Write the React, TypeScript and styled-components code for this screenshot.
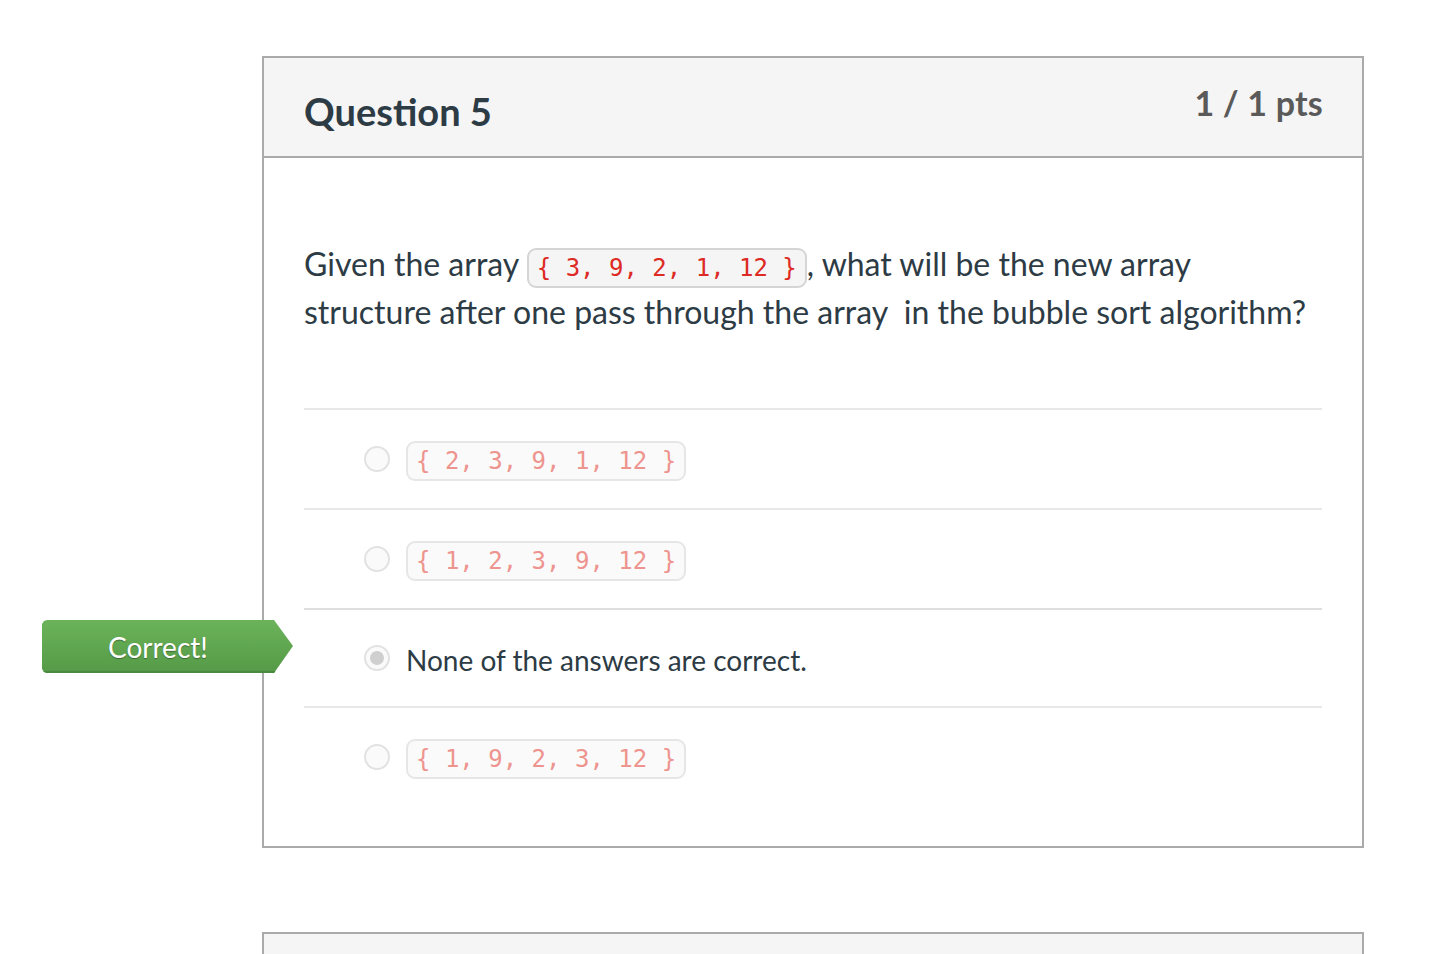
import React from "react";
import styled, { createGlobalStyle } from "styled-components";

const Global = createGlobalStyle`
  html, body { margin: 0; padding: 0; background: #fff; }
  body { font-family: Lato, "Noto Sans", sans-serif; color: #2d3b45; }
`;

const Page = styled.div`
  padding: 56px 84px 0 262px;
  display: flex;
  flex-direction: column;
  gap: 84px;
`;

const Card = styled.section`
  position: relative;
  width: 1102px;
  box-sizing: border-box;
  border: 2px solid #aaaaaa;
`;

const Header = styled.header`
  display: flex;
  justify-content: space-between;
  align-items: flex-start;
  background: #f5f5f5;
  border-bottom: 2px solid #aaaaaa;
  height: 100px;
  box-sizing: border-box;
  padding: 0 39px 0 40px;
`;

const Title = styled.h2`
  margin: 0;
  padding-top: 30px;
  font-size: 38px;
  line-height: 46px;
  font-weight: 700;
  color: #2d3b45;
`;

const Points = styled.div`
  padding-top: 23px;
  font-size: 34px;
  line-height: 44px;
  font-weight: 700;
  color: #5a5a5a;
  letter-spacing: 0.2px;
`;

const Body = styled.div`
  padding: 82px 40px 40px 40px;
`;

const QuestionText = styled.p`
  margin: 0 0 72px 0;
  font-size: 32px;
  line-height: 48px;
`;

const Code = styled.code<{ $faded?: boolean }>`
  font-family: "DejaVu Sans Mono", monospace;
  font-size: 24px;
  line-height: 36px;
  display: inline-block;
  padding: 0 8px;
  border: 2px solid ${(p) => (p.$faded ? "#e6e6e6" : "#d5d5d5")};
  border-radius: 9px;
  background: ${(p) => (p.$faded ? "#fafafa" : "#f5f5f5")};
  color: ${(p) => (p.$faded ? "#ee948f" : "#dd2a24")};
  vertical-align: middle;
  white-space: pre;
`;

const Answers = styled.div`
  display: flex;
  flex-direction: column;
`;

const AnswerRow = styled.div`
  display: flex;
  align-items: center;
  gap: 16px;
  height: 100px;
  box-sizing: border-box;
  padding: 4px 0 0 60px;
  border-top: 2px solid #e8e8e8;
  &:nth-child(3) {
    border-top-color: #dedede;
    height: 98px;
  }
`;

const Radio = styled.span<{ $checked?: boolean }>`
  box-sizing: border-box;
  width: 26px;
  height: 26px;
  border-radius: 50%;
  border: 2px solid #e2e2e2;
  background: #fafafa;
  display: flex;
  align-items: center;
  justify-content: center;
  flex: none;
  margin-top: -4px;
  &::after {
    content: "";
    display: ${(p) => (p.$checked ? "block" : "none")};
    width: 14px;
    height: 14px;
    border-radius: 50%;
    background: #cfcfcf;
  }
`;

const AnswerText = styled.span`
  font-size: 28px;
  line-height: 40px;
  color: #2d3b45;
`;

const CorrectFlag = styled.div`
  position: absolute;
  left: -222px;
  top: 562px;
  width: 251px;
  height: 53px;
  background: linear-gradient(#6bb35a, #559a47);
  clip-path: polygon(0 4px, 2px 1px, 5px 0, 232px 0, 251px 26px, 232px 53px, 5px 53px, 2px 52px, 0 49px);
  color: #fff;
  font-size: 28px;
  font-weight: 400;
  display: flex;
  align-items: center;
  padding-left: 66px;
  box-sizing: border-box;
  text-shadow: 0 1px 1px rgba(0, 0, 0, 0.35);
  box-shadow: inset 0 -2px 0 #4a8a3e;
`;

const NextCard = styled.section`
  width: 1102px;
  box-sizing: border-box;
  height: 40px;
  border: 2px solid #aaaaaa;
  border-bottom: none;
  background: #f5f5f5;
`;

const answers: { code?: string; text?: string; checked?: boolean }[] = [
  { code: "{ 2, 3, 9, 1, 12 }" },
  { code: "{ 1, 2, 3, 9, 12 }" },
  { text: "None of the answers are correct.", checked: true },
  { code: "{ 1, 9, 2, 3, 12 }" },
];

export default function App() {
  return (
    <>
      <Global />
      <Page>
        <Card>
          <Header>
            <Title>Question 5</Title>
            <Points>1 / 1 pts</Points>
          </Header>
          <Body>
            <QuestionText>
              Given the array <Code>{"{ 3, 9, 2, 1, 12 }"}</Code>, what will be the new array
              <br />
              structure after one pass through the array&nbsp; in the bubble sort algorithm?
            </QuestionText>
            <Answers>
              {answers.map((a, i) => (
                <AnswerRow key={i}>
                  <Radio $checked={a.checked} />
                  {a.code ? <Code $faded>{a.code}</Code> : <AnswerText>{a.text}</AnswerText>}
                </AnswerRow>
              ))}
            </Answers>
          </Body>
          <CorrectFlag>Correct!</CorrectFlag>
        </Card>
        <NextCard />
      </Page>
    </>
  );
}
